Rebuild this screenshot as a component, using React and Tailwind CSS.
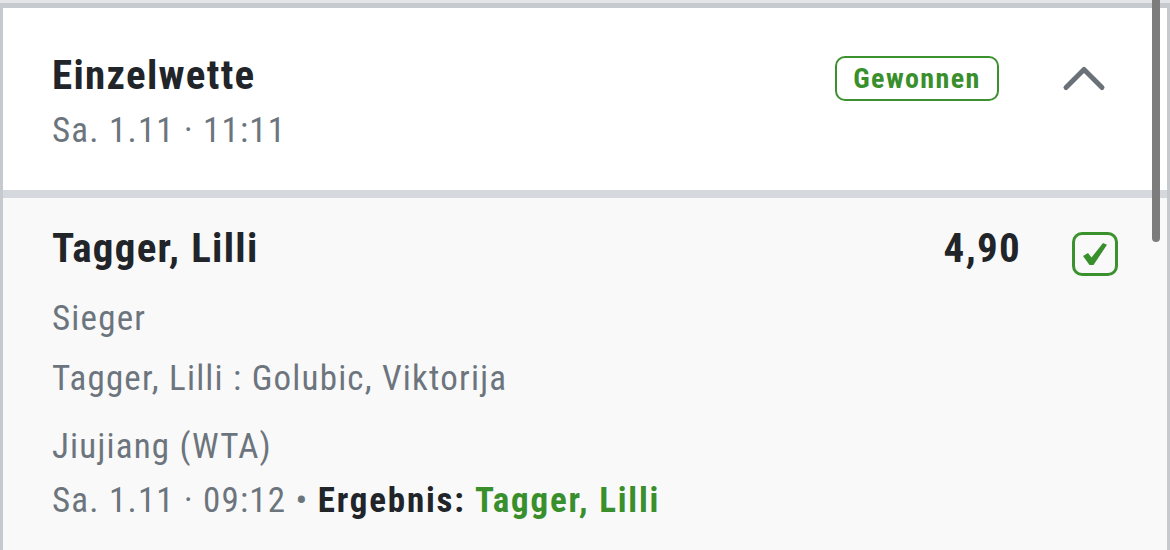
import React from "react";

export default function App() {
  const font = { fontFamily: '"Roboto Condensed", Roboto, "Liberation Sans", sans-serif' };
  const title = "text-[41px] leading-[50px] font-bold tracking-[1.3px] text-[#212529]";
  const sub = "text-[35px] leading-[44px] tracking-[1.2px] text-[#6c757d]";
  return (
    <div className="relative w-[1170px] h-[550px] overflow-hidden bg-[#e3e5e8] pt-[3px]" style={font}>
      <div className="h-full border-t-[5px] border-l-[3px] border-r-[3px] border-[#c6cacf] bg-[#f9f9f9]">
        {/* header */}
        <div className="h-[182px] bg-white flex items-start pl-[49px] pr-[60px]">
          <div className="flex-1 pt-[42px]">
            <div className={title}>Einzelwette</div>
            <div className={sub + " mt-[9px]"}>Sa. 1.11 · 11:11</div>
          </div>
          <div className="pt-[48px] flex items-start">
            <div className="w-[164px] h-[45px] rounded-[10px] border-[2.5px] border-[#3c912f] flex items-center justify-center text-[28px] font-bold tracking-[1.4px] text-[#3a8f2d]">
              Gewonnen
            </div>
            <svg className="ml-[62px] mt-[7px]" width="46" height="30" viewBox="0 0 46 30" fill="none">
              <path d="M5 24.5 L23 6.5 L41 24.5" stroke="#6b7178" strokeWidth="5" strokeLinecap="round" strokeLinejoin="round" />
            </svg>
          </div>
        </div>
        <div className="h-[8px] bg-[#d5d8dc]" />
        {/* content */}
        <div className="pl-[49px] pr-[49px] pt-[25px]">
          <div className="flex items-start">
            <div className={"flex-1 " + title}>Tagger, Lilli</div>
            <div className={title + " mr-[-2px]"}>4,90</div>
            <div className="ml-[53px] mt-[9px] w-[46px] h-[44px] rounded-[10px] border-[3px] border-[#3c912f] flex items-center justify-center">
              <svg width="26" height="24" viewBox="0 0 26 24">
                <path d="M1 14 L6 11 L9.5 15.5 L21 1 L25 2.8 L11.5 23 L7.5 23 Z" fill="#3a8f2d" />
              </svg>
            </div>
          </div>
          <div className={sub + " mt-[21px]"}>Sieger</div>
          <div className={sub + " mt-[16px]"}>Tagger, Lilli : Golubic, Viktorija</div>
          <div className={sub + " mt-[24px]"}>Jiujiang (WTA)</div>
          <div className={sub + " mt-[10px]"}>
            Sa. 1.11 · 09:12 • <span className="font-bold tracking-[1.8px] text-[#212529]">Ergebnis:</span>{" "}
            <span className="font-bold tracking-[1.8px] text-[#3a8f2d]">Tagger, Lilli</span>
          </div>
        </div>
      </div>
      <div className="absolute left-[1152px] top-0 w-[8px] h-[242px] rounded-b-full bg-[#7c7c7c]" />
    </div>
  );
}
